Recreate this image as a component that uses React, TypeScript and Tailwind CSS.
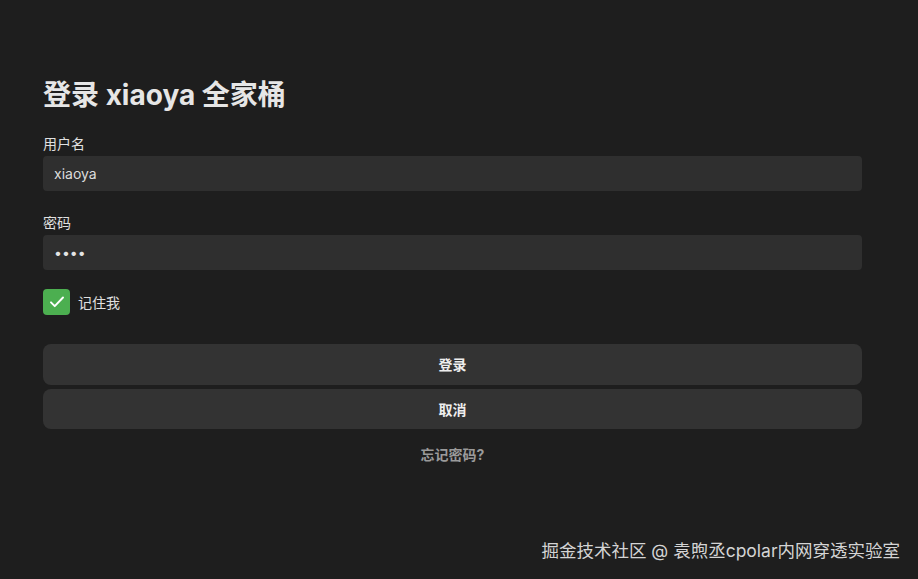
import React, { useState } from "react";

const font = { fontFamily: 'Inter, "Noto Sans CJK SC", sans-serif' };

const LoginPage: React.FC = () => {
  const [username, setUsername] = useState("xiaoya");
  const [password, setPassword] = useState("1234");
  const [remember, setRemember] = useState(true);

  return (
    <div className="relative w-full h-[579px] bg-[#1e1e1e] overflow-hidden" style={font}>
      <div className="flex flex-col px-[43px] pt-[77px] w-[905px]">
        <h1 className="text-[28px] leading-[36px] font-bold text-[#e6e6e6]">
          登录 xiaoya 全家桶
        </h1>

        {/* 用户名 */}
        <label className="mt-[22px] text-[14px] leading-[18px] text-[#e0e0e0]">用户名</label>
        <input
          value={username}
          onChange={(e) => setUsername(e.target.value)}
          className="mt-[3px] h-[35px] w-full rounded-[4px] bg-[#2f2f2f] px-[11px] text-[14px] text-[#dcdcdc] outline-none"
        />

        {/* 密码 */}
        <label className="mt-[23px] text-[14px] leading-[18px] text-[#e0e0e0]">密码</label>
        <input
          type="password"
          value={password}
          onChange={(e) => setPassword(e.target.value)}
          className="mt-[3px] h-[35px] w-full rounded-[4px] bg-[#2f2f2f] px-[11px] text-[14px] text-[#e4e4e4] outline-none"
        />

        {/* 记住我 */}
        <label className="mt-[19px] flex items-center gap-[8px] cursor-pointer">
          <span
            onClick={() => setRemember(!remember)}
            className={
              remember
                ? "flex h-[26px] w-[27px] items-center justify-center rounded-[4px] bg-[#4caf50]"
                : "flex h-[26px] w-[27px] items-center justify-center rounded-[4px] bg-[#2f2f2f]"
            }
          >
            {remember && (
              <svg width="18" height="18" viewBox="0 0 24 24" fill="none" stroke="#fff" strokeWidth="2.6" strokeLinecap="round" strokeLinejoin="round">
                <path d="M4 12.5l5 5L20 6" />
              </svg>
            )}
          </span>
          <span className="text-[14px] text-[#e0e0e0]">记住我</span>
        </label>

        {/* 按钮 */}
        <button className="mt-[29px] h-[41px] w-full rounded-[8px] bg-[#333333] text-[14px] font-bold text-[#eeeeee]">
          登录
        </button>
        <button className="mt-[4px] h-[40px] w-full rounded-[8px] bg-[#333333] text-[14px] font-bold text-[#eeeeee]">
          取消
        </button>

        <a className="mt-[17px] self-center text-[14px] leading-[18px] font-bold text-[#9a9a9a] cursor-pointer">
          忘记密码?
        </a>
      </div>

      <div className="absolute right-[18px] top-[539px] text-[17.5px] leading-[24px] text-[#d4d4d4]">
        掘金技术社区 @ 袁煦丞cpolar内网穿透实验室
      </div>
    </div>
  );
};

export default LoginPage;
